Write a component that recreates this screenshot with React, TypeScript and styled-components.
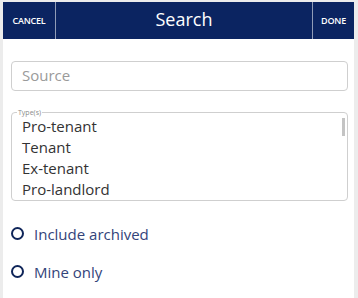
import styled, {createGlobalStyle} from "styled-components";

const GlobalStyle = createGlobalStyle`
  html, body {
    margin: 0;
    padding: 0;
    background: #ececec;
    font-family: "Open Sans", "DejaVu Sans", sans-serif;
  }
`;

const Panel = styled.div`
  margin: 2px 0 0 3px;
  width: 351px;
  height: 296px;
  background: #fff;
  overflow: hidden;
`;

const Header = styled.div`
  height: 37px;
  background: #0b2461;
  display: flex;
  align-items: stretch;
  color: #fff;
`;

const HeaderButton = styled.div<{$side: "left" | "right"}>`
  width: ${p => (p.$side === "left" ? 52 : 41)}px;
  display: flex;
  align-items: center;
  justify-content: center;
  font-size: 9px;
  font-weight: 600;
  letter-spacing: -0.2px;
  padding-bottom: 1px;
  ${p => (p.$side === "left" ? "border-right" : "border-left")}: 1px solid rgba(255, 255, 255, 0.55);
`;

const Title = styled.div`
  flex: 1;
  display: flex;
  align-items: center;
  justify-content: center;
  font-size: 18px;
  padding-bottom: 3px;
`;

const Body = styled.div`
  padding: 22px 6px 0 8px;
  display: flex;
  flex-direction: column;
`;

const TextInput = styled.input`
  box-sizing: border-box;
  height: 30px;
  width: 100%;
  border: 1px solid #cfcfcf;
  border-radius: 4px;
  padding: 0 10px 2px;
  font-family: inherit;
  font-size: 15px;
  color: #333;
  outline: none;
  &::placeholder {
    color: #9a9a9a;
  }
`;

const TypeBox = styled.fieldset`
  position: relative;
  margin: 18px 0 0;
  height: 92px;
  box-sizing: border-box;
  border: 1px solid #cfcfcf;
  border-radius: 4px;
  padding: 0 10px;
`;

const Legend = styled.legend`
  font-size: 7px;
  color: #8a8a8a;
  padding: 0 1px;
  margin-left: -5px;
  line-height: 7px;
`;

const List = styled.div`
  margin-top: 0;
`;

const Option = styled.div`
  font-size: 15px;
  line-height: 21px;
  color: #333;
`;

const ScrollThumb = styled.div`
  position: absolute;
  right: 2px;
  top: 2px;
  width: 3px;
  height: 18px;
  background: #c4c4c4;
`;

const Checks = styled.div`
  margin-top: 22px;
  display: flex;
  flex-direction: column;
  gap: 17px;
`;

const CheckRow = styled.label`
  display: flex;
  align-items: center;
  gap: 10px;
  height: 21px;
  color: #33447a;
  font-size: 15px;
`;

const Circle = styled.span`
  box-sizing: border-box;
  width: 13px;
  height: 13px;
  margin-top: -1px;
  border: 2.5px solid #0f2559;
  border-radius: 50%;
`;

const types = ["Pro-tenant", "Tenant", "Ex-tenant", "Pro-landlord"];

export default function App() {
    return (
        <>
            <GlobalStyle />
            <Panel>
                <Header>
                    <HeaderButton $side="left">CANCEL</HeaderButton>
                    <Title>Search</Title>
                    <HeaderButton $side="right">DONE</HeaderButton>
                </Header>
                <Body>
                    <TextInput placeholder="Source" />
                    <TypeBox>
                        <Legend>Type(s)</Legend>
                        <List>
                            {types.map(t => <Option key={t}>{t}</Option>)}
                        </List>
                        <ScrollThumb />
                    </TypeBox>
                    <Checks>
                        <CheckRow><Circle />Include archived</CheckRow>
                        <CheckRow><Circle />Mine only</CheckRow>
                    </Checks>
                </Body>
            </Panel>
        </>
    );
}
